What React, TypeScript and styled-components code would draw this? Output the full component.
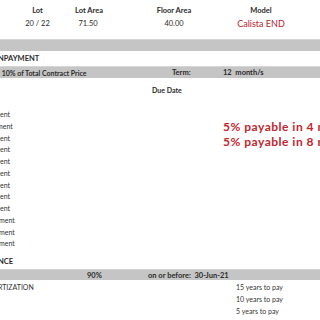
import { createGlobalStyle } from 'styled-components';
import styled from 'styled-components';

const GlobalStyle = createGlobalStyle`
    html, body {
        margin: 0;
        padding: 0;
        background: #ffffff;
    }
    body {
        font-family: Lato, "Liberation Sans", sans-serif;
        color: #2b2b2b;
    }
`;

const Sheet = styled.div`
    width: 320px;
    height: 320px;
    overflow: hidden;
    display: flex;
    flex-direction: column;
    background: #fff;
`;

const Row = styled.div<{ $h: number; $top?: number }>`
    display: flex;
    align-items: center;
    height: ${p => p.$h}px;
    margin-top: ${p => p.$top ?? 0}px;
    flex-shrink: 0;
    white-space: nowrap;
`;

const Cell = styled.div<{ $w: number; $align?: string; $bold?: boolean; $red?: boolean; $size?: number }>`
    width: ${p => p.$w}px;
    flex-shrink: 0;
    text-align: ${p => p.$align ?? 'left'};
    font-size: ${p => p.$size ?? 7.5}px;
    font-weight: ${p => (p.$bold ? 700 : 400)};
    color: ${p => (p.$red ? '#b8262d' : '#2b2b2b')};
`;

const Bar = styled(Row)`
    background: #c5c5c5;
    border-top: 1px solid #d6d6d6;
    box-sizing: border-box;
`;

const Title = styled.div`
    font-size: 7.5px;
    font-weight: 700;
    margin-left: -2px;
`;

const Block = styled.div<{ $top: number }>`
    display: flex;
    margin-top: ${p => p.$top}px;
    flex-shrink: 0;
`;

const LabelList = styled.div<{ $w: number }>`
    width: ${p => p.$w}px;
    flex-shrink: 0;
    display: flex;
    flex-direction: column;
`;

const Label = styled.div<{ $shift?: number; $h?: number }>`
    height: ${p => p.$h ?? 11.75}px;
    line-height: ${p => p.$h ?? 11.75}px;
    font-size: 7px;
    margin-left: ${p => p.$shift ?? 0}px;
    color: #333;
    white-space: nowrap;
`;

const Notes = styled.div<{ $pad: number }>`
    padding-top: ${p => p.$pad}px;
    flex-shrink: 0;
    display: flex;
    flex-direction: column;
`;

const RedNote = styled.div`
    font-size: 12px;
    letter-spacing: 0.5px;
    font-weight: 700;
    color: #c0272d;
    height: 15px;
    line-height: 15px;
    white-space: nowrap;
`;

const YearLine = styled.div`
    font-size: 7px;
    color: #333;
    height: 12px;
    line-height: 12px;
    white-space: nowrap;
`;

const payments = [
    { t: 'ent', s: 0 },
    { t: 'ment', s: -3 },
    { t: 'ent', s: 0 },
    { t: 'ent', s: 0 },
    { t: 'ent', s: 0 },
    { t: 'ent', s: 0 },
    { t: 'ent', s: 0 },
    { t: 'ent', s: 0 },
    { t: 'ent', s: 0 },
    { t: 'ment', s: -1 },
    { t: 'ment', s: -1 },
    { t: 'ment', s: -1 },
];

const App = () => {
    return (
        <Sheet>
            <GlobalStyle />
            <Row $h={13} $top={4}>
                <Cell $w={75} $align="center" $bold>Lot</Cell>
                <Cell $w={26} $align="center" $bold>Lot Area</Cell>
                <Cell $w={46} />
                <Cell $w={54} $align="center" $bold>Floor Area</Cell>
                <Cell $w={26} />
                <Cell $w={68} $align="center" $bold>Model</Cell>
            </Row>
            <Row $h={13}>
                <Cell $w={75} $align="center">20 / 22</Cell>
                <Cell $w={26} $align="center">71.50</Cell>
                <Cell $w={46} />
                <Cell $w={54} $align="center">40.00</Cell>
                <Cell $w={26} />
                <Cell $w={68} $align="center" $red $size={9}>Calista END</Cell>
            </Row>
            <Bar $h={12} $top={9} />
            <Row $h={14}>
                <Title>NPAYMENT</Title>
            </Row>
            <Bar $h={12} $top={1}>
                <Cell $w={172} $bold $size={7}>&nbsp;10% of Total Contract Price</Cell>
                <Cell $w={51} $bold>Term:</Cell>
                <Cell $w={60} $bold>12&nbsp; month/s</Cell>
            </Bar>
            <Row $h={12} $top={6}>
                <Cell $w={152} />
                <Cell $w={40} $bold $size={7}>Due Date</Cell>
            </Row>
            <Block $top={13}>
                <LabelList $w={223}>
                    {payments.map((p, i) => (
                        <Label key={i} $shift={p.s}>{p.t}</Label>
                    ))}
                </LabelList>
                <Notes $pad={9.5}>
                    <RedNote>5% payable in 4 months</RedNote>
                    <RedNote>5% payable in 8 months</RedNote>
                </Notes>
            </Block>
            <Row $h={12} $top={5}>
                <Title>NCE</Title>
            </Row>
            <Bar $h={11} $top={2}>
                <Cell $w={87} />
                <Cell $w={61} $bold>90%</Cell>
                <Cell $w={90} $bold>on or before:&nbsp; 30-Jun-21</Cell>
            </Bar>
            <Block $top={1}>
                <LabelList $w={236}>
                    <Label $shift={-2} $h={12}>RTIZATION</Label>
                </LabelList>
                <Notes $pad={0}>
                    <YearLine>15 years to pay</YearLine>
                    <YearLine>10 years to pay</YearLine>
                    <YearLine>5 years to pay</YearLine>
                </Notes>
            </Block>
        </Sheet>
    );
};

export default App;
